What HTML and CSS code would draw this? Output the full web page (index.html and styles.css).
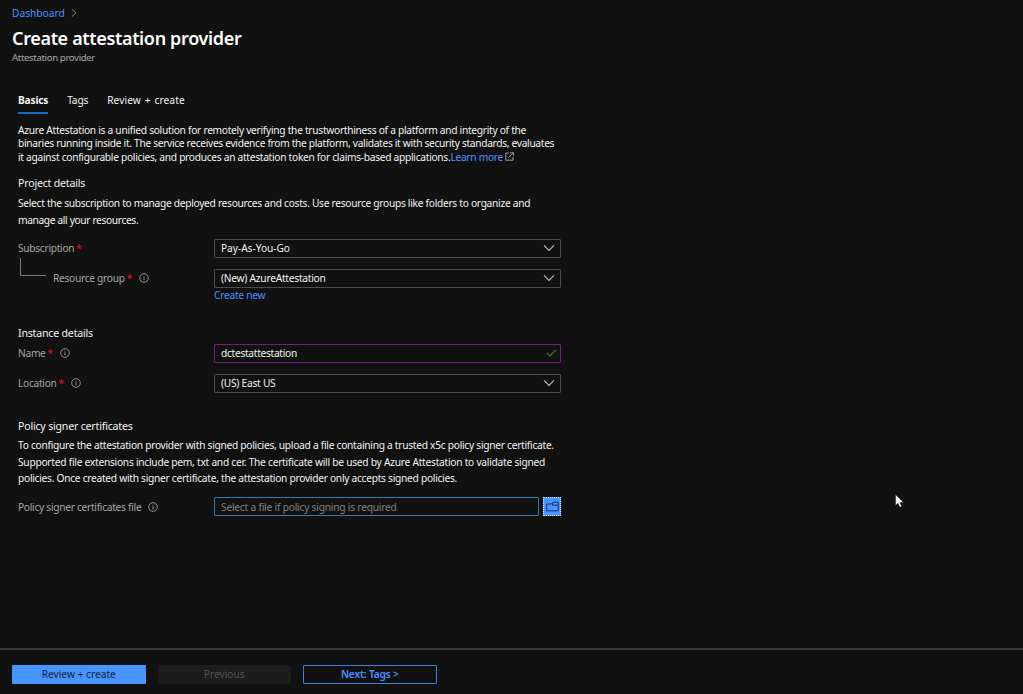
FILE: index.html
```html
<!DOCTYPE html>
<html lang="en">
<head>
<meta charset="utf-8">
<title>Create attestation provider</title>
<link rel="stylesheet" href="styles.css">
</head>
<body>
<svg class="defs" aria-hidden="true">
  <symbol id="info" viewBox="0 0 10 10"><circle cx="5" cy="5" r="4.3" fill="none" stroke="currentColor" stroke-width=".85"/><path d="M5 4.3V7.4M5 2.6V3.5" fill="none" stroke="currentColor" stroke-width=".9"/></symbol>
  <symbol id="chevron" viewBox="0 0 12 8"><path d="M1 1.3L6 6.4L11 1.3" fill="none" stroke="currentColor" stroke-width="1.1"/></symbol>
</svg>
<div class="page">
  <main class="main">
    <header class="header">
      <nav class="crumbs"><a class="link">Dashboard</a><svg class="crumb-arrow" viewBox="0 0 6 8"><path d="M1 .6L5 4L1 7.4" fill="none" stroke="currentColor" stroke-width=".9"/></svg></nav>
      <h1 class="title">Create attestation provider</h1>
      <div class="subtitle">Attestation provider</div>
    </header>
    <nav class="tabs">
      <a class="tab tab-active">Basics</a>
      <a class="tab tab-tags">Tags</a>
      <a class="tab tab-review">Review + create</a>
    </nav>
    <section class="content">
      <p class="intro">
        <span class="line i1">Azure Attestation is a unified solution for remotely verifying the trustworthiness of a platform and integrity of the</span>
        <span class="line i2">binaries running inside it. The service receives evidence from the platform, validates it with security standards, evaluates</span>
        <span class="line i3">it against configurable policies, and produces an attestation token for claims-based applications.<a class="link">Learn more</a><svg class="external" viewBox="0 0 9 9"><path d="M4 1H.8V8.2H8V5M5.3.7H8.4V3.8M8.3.8L3.3 5.8" fill="none" stroke="currentColor" stroke-width=".85"/></svg></span>
      </p>
      <h2 class="heading h-project">Project details</h2>
      <p class="text">
        <span class="line p1">Select the subscription to manage deployed resources and costs. Use resource groups like folders to organize and</span>
        <span class="line p2">manage all your resources.</span>
      </p>
      <div class="row row-subscription">
        <label class="label">Subscription<b class="star">*</b></label>
        <div class="field">Pay-As-You-Go<svg class="chevron"><use href="#chevron"/></svg></div>
      </div>
      <div class="row row-group">
        <label class="label"><i class="branch"></i>Resource group<b class="star">*</b><svg class="info"><use href="#info"/></svg></label>
        <div class="field f-group">(New) AzureAttestation<svg class="chevron"><use href="#chevron"/></svg></div>
      </div>
      <a class="link create-new">Create new</a>
      <h2 class="heading h-instance">Instance details</h2>
      <div class="row row-name">
        <label class="label">Name<b class="star">*</b><svg class="info"><use href="#info"/></svg></label>
        <div class="field field-edited">dctestattestation<svg class="check" viewBox="0 0 11 8"><path d="M1 4L4 7L10 1" fill="none" stroke="currentColor" stroke-width="1.1"/></svg></div>
      </div>
      <div class="row row-location">
        <label class="label">Location<b class="star">*</b><svg class="info"><use href="#info"/></svg></label>
        <div class="field f-location">(US) East US<svg class="chevron"><use href="#chevron"/></svg></div>
      </div>
      <h2 class="heading h-policy">Policy signer certificates</h2>
      <p class="text">
        <span class="line c1">To configure the attestation provider with signed policies, upload a file containing a trusted x5c policy signer certificate.</span>
        <span class="line c2">Supported file extensions include pem, txt and cer. The certificate will be used by Azure Attestation to validate signed</span>
        <span class="line c3">policies. Once created with signer certificate, the attestation provider only accepts signed policies.</span>
      </p>
      <div class="row row-file">
        <label class="label l-file">Policy signer certificates file<svg class="info"><use href="#info"/></svg></label>
        <div class="picker">
          <div class="field field-file">Select a file if policy signing is required</div>
          <div class="browse"><svg class="folder" viewBox="0 0 13 11"><path d="M.7 3H5.4L7.2 1.2H12.2V9.8H.7ZM6.6 1.8V4.2H12" fill="none" stroke="currentColor" stroke-width="1"/></svg></div>
        </div>
      </div>
    </section>
  </main>
  <footer class="footer">
    <div class="button primary">Review + create</div>
    <div class="button disabled">Previous</div>
    <div class="button outline">Next: Tags &gt;</div>
  </footer>
  <svg class="cursor" viewBox="0 0 9 14"><path d="M.5.5V11.5L3 9.2L4.8 13.2L6.6 12.4L4.9 8.6H8.5Z" fill="#fff" stroke="#000" stroke-width=".4"/></svg>
</div>
</body>
</html>
```
FILE: styles.css
```css
* { box-sizing: border-box; }
body {
  margin: 0;
  background: #111;
  color: #f3f3f3;
  font: 10.2px/16px "Noto Sans", "Open Sans", sans-serif;
  letter-spacing: -0.25px;
}
h1, h2, p { margin: 0; font-weight: 400; }
.defs { position: absolute; width: 0; height: 0; }
.page { display: flex; flex-direction: column; height: 694px; overflow: hidden; }
.main { flex: 1; min-height: 0; }
.link { color: #4894fe; }
.header { padding: 5px 12px 0; }
.crumbs { display: flex; align-items: center; height: 16px; gap: 6px; letter-spacing: 0; }
.crumb-arrow { width: 6px; height: 8px; color: #999; }
.title { margin-top: 3px; font-size: 18px; line-height: 28px; font-weight: 600; letter-spacing: -0.34px; color: #fff; }
.subtitle { line-height: 12px; font-size: 9.6px; letter-spacing: -0.35px; color: #a6a6a6; }
.tabs { display: flex; gap: 19px; margin: 28px 0 0 18px; }
.tab { padding-bottom: 3px; line-height: 17px; border-bottom: 2px solid transparent; letter-spacing: -0.2px; }
.tab-active { border-color: #0c6cbd; font-weight: 700; }
.tab-review { letter-spacing: 0.1px; word-spacing: 1px; }
.content { width: 562px; padding: 10px 0 0 18px; }
.line { display: block; white-space: nowrap; }
.i1 { letter-spacing: -0.28px; }
.i2 { letter-spacing: -0.31px; }
.i3 { letter-spacing: -0.285px; }
.p1 { letter-spacing: -0.285px; }
.p2 { letter-spacing: -0.35px; }
.c1, .c3 { letter-spacing: -0.272px; }
.c2 { letter-spacing: -0.25px; }
.intro { line-height: 13.4px; }
.external { width: 9px; height: 9px; margin-left: 2px; color: #bbb; }
.heading { font-size: 10.6px; line-height: 16px; letter-spacing: -0.2px; }
.h-project { margin: 11px 0 4px; }
.text { line-height: 16.3px; }
.row { display: grid; grid-template-columns: 196px 347px; height: 19px; }
.row-subscription { margin-top: 11px; }
.row-group { margin-top: 11px; }
.label { display: flex; align-items: center; color: #a6a6a6; letter-spacing: -0.29px; }
.star { margin-left: 2px; color: #d01020; font-weight: 700; }
.info { width: 10px; height: 10px; margin-left: 7.5px; color: #aaa; }
.l-file .info { margin-left: 6.5px; }
.branch { width: 26px; height: 18px; margin: -22px 7px 0 2px; border: solid #777; border-width: 0 0 1px 1px; }
.field {
  display: flex; align-items: center; justify-content: space-between;
  height: 19px; padding: 0 5px 0 6px; border: 1px solid #4c4c4c; border-radius: 1px;
}
.row-subscription .field { letter-spacing: -0.05px; }
.chevron { width: 12px; height: 8px; color: #bbb; }
.create-new { display: block; margin: 0 0 0 196px; line-height: 14px; }
.h-instance { margin: 23px 0 3px; }
.field-edited { padding-right: 3px; border-color: #72217e; letter-spacing: -0.3px; }
.check { width: 11px; height: 8px; color: #3f7d12; }
.row-location { margin-top: 11px; }
.h-policy { margin: 25px 0 3.5px; }
.row-file { margin-top: 11px; }
.picker { display: flex; gap: 4px; }
.field-file { width: 325px; border-color: #3778ad; color: #808080; letter-spacing: -0.21px; }
.browse { display: flex; align-items: center; justify-content: center; width: 18px; height: 19px; background: #4894fe; border: 1px dotted #cfe3ff; }
.folder { flex: none; width: 13px; height: 11px; color: #15365f; }
.footer { display: flex; gap: 12px; height: 46px; padding: 15px 12px 0; border-top: 2px solid #383838; }
.button { width: 133.5px; height: 19px; line-height: 19px; text-align: center; border-radius: 1px; letter-spacing: 0; }
.primary { background: #4894fe; color: #10233d; }
.disabled { background: #1d1d1d; color: #555; }
.outline { border: 1px solid #3f7fd6; color: #4894fe; line-height: 17px; font-weight: 600; letter-spacing: -0.2px; }
.cursor { position: absolute; left: 895px; top: 494px; width: 9px; height: 14px; }
```
